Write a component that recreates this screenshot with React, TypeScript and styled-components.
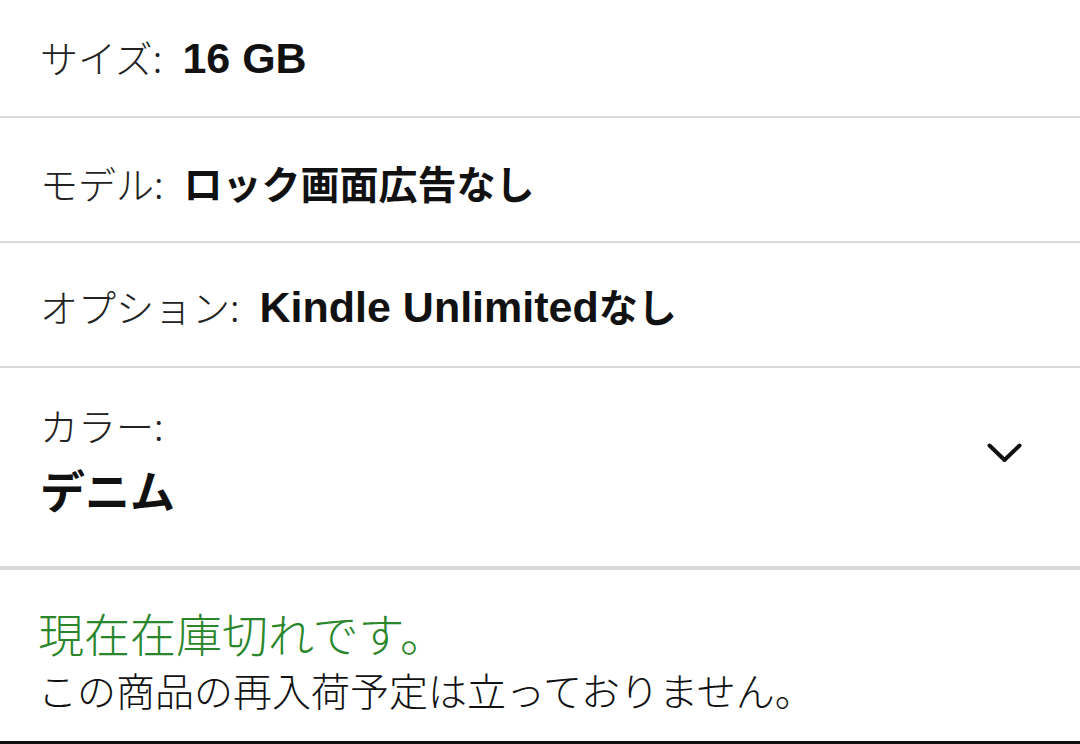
import React from "react";
import styled, { createGlobalStyle } from "styled-components";

const GlobalStyle = createGlobalStyle`
  html, body {
    margin: 0;
    padding: 0;
    background: #ffffff;
  }
  body {
    font-family: "Noto Sans CJK JP", "Noto Sans", sans-serif;
    color: #111111;
  }
`;

const options = [
  { label: "サイズ:", value: [{ latin: true, text: "16 GB" }], height: 118, pad: 1 },
  { label: "モデル:", value: [{ latin: false, text: "ロック画面広告なし" }], height: 125, pad: 6 },
  {
    label: "オプション:",
    value: [
      { latin: true, text: "Kindle Unlimited" },
      { latin: false, text: "なし" },
    ],
    height: 125,
    pad: 7,
  },
];

export default function App() {
  return (
    <Page>
      <GlobalStyle />
      {options.map((opt) => (
        <OptionRow key={opt.label} $height={opt.height} $pad={opt.pad}>
          <Line>
            <Label>{opt.label}</Label>
            <Value>
              {opt.value.map((part) =>
                part.latin ? (
                  <Latin key={part.text}>{part.text}</Latin>
                ) : (
                  <span key={part.text}>{part.text}</span>
                )
              )}
            </Value>
          </Line>
        </OptionRow>
      ))}
      <ColorRow>
        <div>
          <ColorLabel>カラー:</ColorLabel>
          <ColorValue>デニム</ColorValue>
        </div>
        <Chevron viewBox="0 0 35 20" aria-hidden="true">
          <polyline points="2.5,2.5 17.5,17 32.5,2.5" />
        </Chevron>
      </ColorRow>
      <Status>
        <Availability>現在在庫切れです。</Availability>
        <Note>この商品の再入荷予定は立っておりません。</Note>
      </Status>
    </Page>
  );
}

const Page = styled.div`
  width: 1080px;
  height: 744px;
  overflow: hidden;
  background: #ffffff;
`;

const OptionRow = styled.div<{ $height: number; $pad: number }>`
  box-sizing: border-box;
  height: ${(p) => p.$height}px;
  padding: ${(p) => p.$pad}px 40px 0;
  display: flex;
  align-items: center;
  border-bottom: 2px solid #d9dbdb;
`;

const Line = styled.div`
  display: flex;
  align-items: baseline;
  gap: 20px;
  line-height: 1.2;
`;

const Label = styled.span`
  font-size: 38px;
  font-weight: 300;
  color: #222222;
`;

const Value = styled.span`
  font-size: 39px;
  font-weight: 700;
  color: #111111;
`;

const Latin = styled.span`
  font-family: "Liberation Sans", Arial, sans-serif;
  font-size: 43px;
  font-weight: 700;
`;

const ColorRow = styled.div`
  box-sizing: border-box;
  height: 202px;
  padding: 35px 58px 0 40px;
  display: flex;
  justify-content: space-between;
  align-items: flex-start;
  border-bottom: 4px solid #d9dbdb;
`;

const ColorLabel = styled.div`
  font-size: 38px;
  font-weight: 300;
  line-height: 44px;
  color: #222222;
`;

const ColorValue = styled.div`
  margin-top: 20px;
  font-size: 45px;
  line-height: 45px;
  font-weight: 700;
  color: #111111;
`;

const Chevron = styled.svg`
  width: 35px;
  height: 20px;
  margin-top: 40px;
  fill: none;
  stroke: #111111;
  stroke-width: 4;
  stroke-linecap: round;
  stroke-linejoin: round;
`;

const Status = styled.div`
  box-sizing: border-box;
  height: 174px;
  padding: 35px 40px 0 38px;
  border-bottom: 3px solid #111111;
`;

const Availability = styled.div`
  font-size: 46px;
  line-height: 55px;
  font-weight: 300;
  color: #2a862a;
`;

const Note = styled.div`
  margin-top: 6px;
  font-size: 39px;
  line-height: 47px;
  font-weight: 300;
  color: #111111;
`;
